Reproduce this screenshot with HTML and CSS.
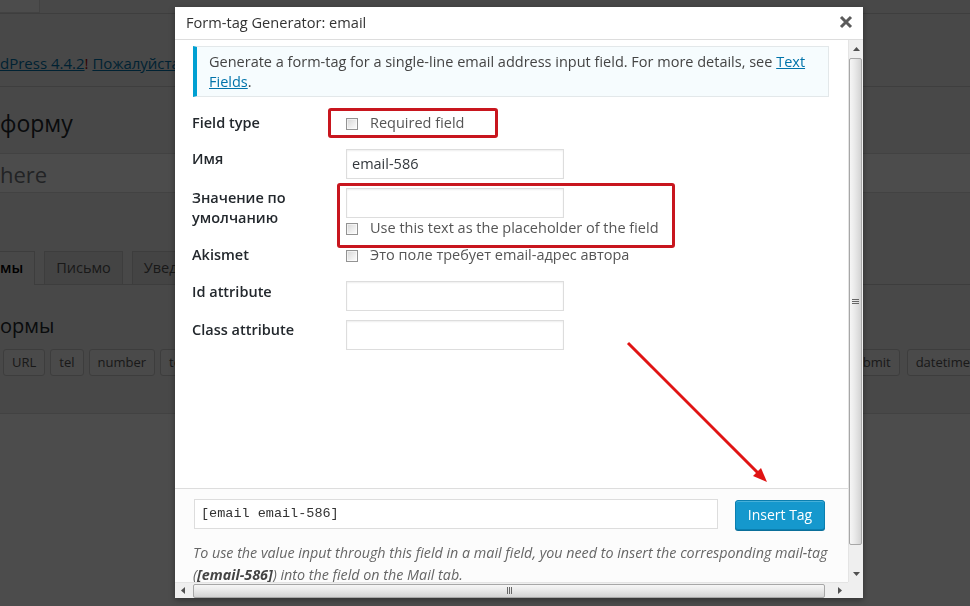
FILE: index.html
```html
<!DOCTYPE html>
<html lang="ru">
<head>
<meta charset="utf-8">
<title>Form-tag Generator: email</title>
<link rel="stylesheet" href="styles.css">
</head>
<body>
<div class="wp">
  <div class="topstrip"><span class="scr-tab"></span></div>
  <div class="nag"><a href="#">dPress 4.4.2</a><span class="bang">!</span> <a href="#">Пожалуйста</a>, обновитесь.</div>
  <h1 class="wp-title">форму</h1>
  <div class="title-input"><span class="ph">here</span></div>
  <div class="tabs">
    <span class="tab active">мы</span>
    <span class="tab">Письмо</span>
    <span class="tab">Уведомления при отправке формы</span>
  </div>
  <h2 class="wp-sub">ормы</h2>
  <div class="tagrow">
    <div class="taggroup"><span class="tagbtn">URL</span><span class="tagbtn">tel</span><span class="tagbtn">number</span><span class="tagbtn">textarea</span></div>
    <div class="taggroup end"><span class="tagbtn">submit</span><span class="tagbtn">datetime</span></div>
  </div>
  <div class="textarea"></div>
</div>

<div class="overlay"></div>

<div class="modal">
  <div class="tb-head">
    <span class="tb-title">Form-tag Generator: email</span>
    <span class="tb-close"><svg viewBox="0 0 14 14"><path d="M2 2L12 12M12 2L2 12" stroke="#5a5a5a" stroke-width="3" fill="none"/></svg></span>
  </div>
  <div class="tb-body">
    <div class="tb-content">
      <div class="tb-main">
        <div class="info">Generate a form-tag for a single-line email address input field. For more details, see <a href="#">Text Fields</a>.</div>
        <div class="form">
          <div class="row sp">
            <div class="lbl">Field type</div>
            <div class="fld"><label class="chk"><span class="box"></span>Required field</label></div>
          </div>
          <div class="row sp">
            <div class="lbl">Имя</div>
            <div class="fld"><div class="inp">email-586</div></div>
          </div>
          <div class="row">
            <div class="lbl">Значение по<br>умолчанию</div>
            <div class="fld"><div class="inp"></div><label class="chk"><span class="box"></span>Use this text as the placeholder of the field</label></div>
          </div>
          <div class="row tight">
            <div class="lbl">Akismet</div>
            <div class="fld"><label class="chk"><span class="box"></span>Это поле требует email-адрес автора</label></div>
          </div>
          <div class="row sp">
            <div class="lbl lo">Id attribute</div>
            <div class="fld"><div class="inp"></div></div>
          </div>
          <div class="row">
            <div class="lbl">Class attribute</div>
            <div class="fld"><div class="inp"></div></div>
          </div>
        </div>
      </div>
      <div class="tb-foot">
        <div class="insert">
          <div class="tagcode">[email email-586]</div>
          <span class="btn">Insert Tag</span>
        </div>
        <p class="mailtag">To use the value input through this field in a mail field, you need to insert the corresponding mail-tag <span class="nw">(<strong>[email-586]</strong>)</span> into the field on the Mail tab.</p>
      </div>
      <div class="mark m1"></div>
      <div class="mark m2"></div>
      <svg class="arrow" viewBox="0 0 673 542">
        <line x1="453" y1="303" x2="584" y2="434" stroke="#e01414" stroke-width="3"/>
        <polygon points="592,442 586,428 578,436" fill="#e01414"/>
      </svg>
    </div>
    <div class="vscroll">
      <div class="sb-btn"><svg viewBox="0 0 7 4"><polygon points="3.5,0 7,4 0,4" fill="#505050"/></svg></div>
      <div class="vthumb"><span class="grip-h"></span></div>
      <div class="sb-fill"></div>
      <div class="sb-btn"><svg viewBox="0 0 7 4"><polygon points="0,0 7,0 3.5,4" fill="#505050"/></svg></div>
    </div>
    <div class="hscroll">
      <div class="sb-btn h"><svg class="hs" viewBox="0 0 4 7"><polygon points="0,3.5 4,0 4,7" fill="#505050"/></svg></div>
      <div class="hthumb"><span class="grip-v"></span></div>
      <div class="sb-fill"></div>
      <div class="sb-btn h"><svg class="hs" viewBox="0 0 4 7"><polygon points="0,0 4,3.5 0,7" fill="#505050"/></svg></div>
    </div>
    <div class="corner"></div>
  </div>
</div>
</body>
</html>
```

FILE: styles.css
```css
* { box-sizing: border-box; }
html, body { margin: 0; }
body {
  width: 970px;
  height: 606px;
  overflow: hidden;
  position: relative;
  background: #f1f1f1;
  font-family: "Open Sans", "Noto Sans", sans-serif;
  color: #23282d;
}

/* ---------- underlying admin page ---------- */
.wp { width: 970px; }
.topstrip { height: 14px; border-bottom: 1px solid #cfcfcf; }
.scr-tab { display: block; width: 40px; height: 13px; background: #fff; border-right: 1px solid #ddd; border-bottom: 1px solid #ddd; }
.nag {
  padding: 39px 0 13px;
  line-height: 20px;
  font-size: 15px;
  white-space: nowrap;
  border-bottom: 1px solid #cfcfcf;
}
.nag a { color: #0073aa; text-decoration: underline; }
.bang { color: #a00; }
.wp-title { margin: 0; padding: 21px 0 15px; font-size: 23px; line-height: 30px; font-weight: 400; }
.title-input {
  height: 40px;
  border-top: 1px solid #ddd;
  border-bottom: 1px solid #ddd;
  background: #fff;
  padding-top: 2px;
  font-size: 22px;
  line-height: 36px;
  color: #72777c;
}
.tabs {
  display: flex;
  gap: 9px;
  margin-top: 58px;
  height: 34px;
  border-bottom: 1px solid #ccc;
  white-space: nowrap;
}
.tab {
  height: 33px;
  padding: 4px 11px;
  line-height: 24px;
  font-size: 14.5px;
  border: 1px solid #ccc;
  border-bottom: 0;
  background: #e4e4e4;
  color: #555;
}
.tab.active { background: #f1f1f1; color: #000; border-left: 0; padding-left: 0; height: 34px; font-weight: 600; }
.wp-sub { margin: 28px 0 0; font-size: 20px; line-height: 26px; font-weight: 400; }
.tagrow { display: flex; justify-content: space-between; margin: 10px -9px 0 0; padding-left: 3px; }
.taggroup { display: flex; gap: 5px; }
.taggroup.end { gap: 7px; }
.tagbtn {
  height: 27px;
  line-height: 25px;
  padding: 0 8px;
  border: 1px solid #ccc;
  border-radius: 3px;
  background: #f7f7f7;
  font-size: 13px;
  color: #555;
}
.textarea { margin-top: 37px; height: 200px; border-top: 1px solid #ddd; background: #fff; }

.overlay { position: fixed; inset: 0; background: rgba(0, 0, 0, 0.7); z-index: 1; }

/* ---------- modal ---------- */
.modal {
  position: absolute;
  left: 175px;
  top: 7px;
  width: 688px;
  height: 591px;
  background: #fff;
  box-shadow: 0 2px 6px rgba(0, 0, 0, 0.35);
  display: flex;
  flex-direction: column;
  z-index: 2;
}
.tb-head {
  height: 33px;
  flex: none;
  border-bottom: 1px solid #ddd;
  display: flex;
  align-items: center;
  justify-content: space-between;
  padding: 0 10px 2px 11px;
}
.tb-title { font-size: 14.6px; line-height: 30px; color: #333; }
.tb-close svg { display: block; width: 14px; height: 14px; }

.tb-body {
  display: grid;
  grid-template-columns: 673px 15px;
  grid-template-rows: 542px 16px;
}
.tb-content { position: relative; overflow: hidden; display: flex; flex-direction: column; }
.tb-main { flex: 1; padding: 6px 19px 0 17px; }

.info {
  margin-left: 1px;
  border: 1px solid #e3e8ea;
  border-left: 4px solid #00a0d2;
  background: #f6fcfe;
  padding: 5px 12px 4px;
  font-size: 14.5px;
  line-height: 20px;
  color: #444;
}
.info a { color: #0073aa; text-decoration: underline; }

.row { display: grid; grid-template-columns: 154px 1fr; margin-top: 9px; }
.row.sp { margin-top: 16px; }
.row.tight { margin-top: 7px; }
.lbl { font-size: 14.5px; font-weight: 600; line-height: 20px; color: #23282d; }
.lbl.lo { padding-top: 1px; }
.inp {
  width: 218px;
  height: 30px;
  border: 1px solid #ddd;
  box-shadow: inset 0 1px 2px rgba(0, 0, 0, 0.07);
  background: #fff;
  padding: 0 5px;
  font-size: 14.5px;
  line-height: 28px;
  color: #32373c;
}
.chk { display: flex; align-items: center; gap: 12px; font-size: 14.5px; line-height: 20px; color: #555; white-space: nowrap; }
.box {
  width: 12px;
  height: 12px;
  flex: none;
  margin-top: 1px;
  border: 1px solid #939393;
  background: linear-gradient(135deg, #d6d6d6 0%, #efefef 60%, #fdfdfd 100%);
  box-shadow: inset 0 0 0 1px rgba(255, 255, 255, 0.55);
}

.tb-foot {
  height: 94px;
  flex: none;
  border-top: 1px solid #ddd;
  background: #fcfcfc;
  padding: 10px 12px 0 18px;
  overflow: hidden;
}
.insert { display: flex; align-items: flex-start; }
.tagcode {
  margin-left: 1px;
  width: 524px;
  height: 30px;
  border: 1px solid #ddd;
  background: #fff;
  padding: 0 6px;
  font-family: "Liberation Mono", "DejaVu Sans Mono", monospace;
  font-size: 13.5px;
  line-height: 28px;
  color: #333;
}
.btn {
  margin: 1px 0 0 17px;
  width: 90px;
  height: 30px;
  border: 1px solid #0b7fb0;
  border-radius: 3px;
  background: #1598cd;
  box-shadow: inset 0 1px 0 rgba(120, 200, 230, 0.5), 0 1px 0 #0a6f9a;
  color: #fff;
  font-size: 14px;
  line-height: 28px;
  text-align: center;
}
.mailtag { margin: 12px 0 0; font-style: italic; font-size: 14.3px; line-height: 22px; color: #666; }
.mailtag strong { color: #444; }
.nw { white-space: nowrap; }

.mark { position: absolute; border: 3px solid #c8161e; border-radius: 3px; }
.m1 { left: 153px; top: 68px; width: 170px; height: 30px; }
.m2 { left: 162px; top: 143px; width: 338px; height: 65px; }
.arrow { position: absolute; left: 0; top: 0; width: 673px; height: 542px; pointer-events: none; }

/* ---------- scrollbars ---------- */
.vscroll { background: #efefef; display: flex; flex-direction: column; border-left: 1px solid #e4e4e4; }
.sb-btn { height: 17px; flex: none; display: flex; align-items: center; justify-content: center; }
.sb-btn svg { width: 7px; height: 4px; display: block; }
.sb-btn.h { height: auto; width: 16px; align-self: stretch; }
.sb-btn svg.hs { width: 4px; height: 7px; }
.sb-fill { flex: 1; }
.vthumb {
  margin: 1px 1px 0 0;
  height: 487px;
  flex: none;
  border: 1px solid #a7a7a7;
  border-radius: 2px;
  background: linear-gradient(90deg, #f6f6f6 0%, #e9e9e9 45%, #d3d3d3 100%);
  display: flex;
  align-items: center;
  justify-content: center;
}
.grip-h { width: 7px; height: 5px; background: repeating-linear-gradient(180deg, #666 0 1px, transparent 1px 2px); }
.hscroll { background: #efefef; display: flex; align-items: center; border-top: 1px solid #e4e4e4; }
.hthumb {
  margin-left: 2px;
  width: 632px;
  height: 14px;
  flex: none;
  border: 1px solid #a7a7a7;
  border-radius: 2px;
  background: linear-gradient(180deg, #f6f6f6 0%, #e9e9e9 45%, #d3d3d3 100%);
  display: flex;
  align-items: center;
  justify-content: center;
}
.grip-v { width: 5px; height: 7px; background: repeating-linear-gradient(90deg, #666 0 1px, transparent 1px 2px); }
.corner { background: #efefef; }
```
